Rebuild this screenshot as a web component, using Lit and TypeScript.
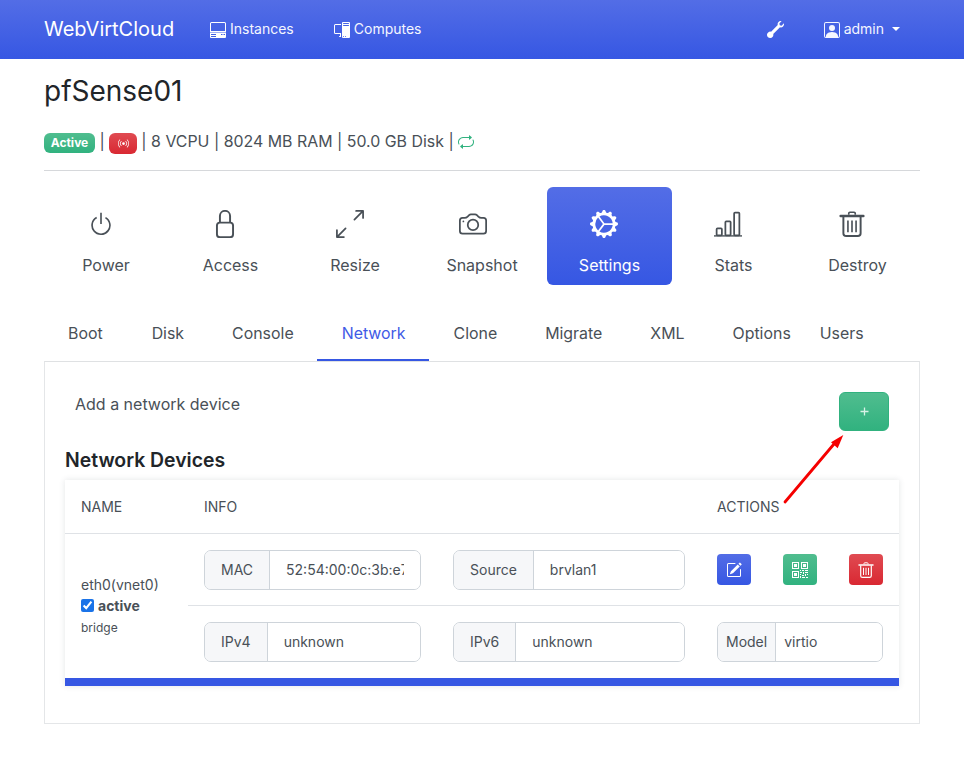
import { LitElement, html, css, svg } from "lit";
import { customElement } from "lit/decorators.js";

const P = {
  power: svg`<path d="M7.5 1v7h1V1h-1z"/><path d="M3 8.812a4.999 4.999 0 0 1 2.578-4.375l-.485-.874A6 6 0 1 0 11 3.616l-.501.865A5 5 0 1 1 3 8.812z"/>`,
  resize: svg`<path fill-rule="evenodd" d="M5.828 10.172a.5.5 0 0 0-.707 0l-4.096 4.096V11.5a.5.5 0 0 0-1 0v3.975a.5.5 0 0 0 .5.5H4.5a.5.5 0 0 0 0-1H1.732l4.096-4.096a.5.5 0 0 0 0-.707zm4.344-4.344a.5.5 0 0 0 .707 0l4.096-4.096V4.5a.5.5 0 1 0 1 0V.525a.5.5 0 0 0-.5-.5H11.5a.5.5 0 0 0 0 1h2.768l-4.096 4.096a.5.5 0 0 0 0 .707z"/>`,
  camera: svg`<path d="M15 12a1 1 0 0 1-1 1H2a1 1 0 0 1-1-1V6a1 1 0 0 1 1-1h1.172a3 3 0 0 0 2.12-.879l.83-.828A1 1 0 0 1 6.827 3h2.344a1 1 0 0 1 .707.293l.828.828A3 3 0 0 0 12.828 5H14a1 1 0 0 1 1 1v6zM2 4a2 2 0 0 0-2 2v6a2 2 0 0 0 2 2h12a2 2 0 0 0 2-2V6a2 2 0 0 0-2-2h-1.172a2 2 0 0 1-1.414-.586l-.828-.828A2 2 0 0 0 9.172 2H6.828a2 2 0 0 0-1.414.586l-.828.828A2 2 0 0 1 3.172 4H2z"/><path d="M8 11a2.5 2.5 0 1 1 0-5 2.5 2.5 0 0 1 0 5zm0 1a3.5 3.5 0 1 0 0-7 3.5 3.5 0 0 0 0 7zM3 6.5a.5.5 0 1 1-1 0 .5.5 0 0 1 1 0z"/>`,
  gear: svg`<path d="M7.068.727c.243-.97 1.62-.97 1.864 0l.071.286a.96.96 0 0 0 1.622.434l.205-.211c.695-.719 1.888-.03 1.613.931l-.08.284a.96.96 0 0 0 1.187 1.187l.283-.081c.96-.275 1.65.918.931 1.613l-.211.205a.96.96 0 0 0 .434 1.622l.286.071c.97.243.97 1.62 0 1.864l-.286.071a.96.96 0 0 0-.434 1.622l.211.205c.719.695.03 1.888-.931 1.613l-.284-.08a.96.96 0 0 0-1.187 1.187l.081.283c.275.96-.918 1.65-1.613.931l-.205-.211a.96.96 0 0 0-1.622.434l-.071.286c-.243.97-1.62.97-1.864 0l-.071-.286a.96.96 0 0 0-1.622-.434l-.205.211c-.695.719-1.888.03-1.613-.931l.08-.284a.96.96 0 0 0-1.186-1.187l-.284.081c-.96.275-1.65-.918-.931-1.613l.211-.205a.96.96 0 0 0-.434-1.622l-.286-.071c-.97-.243-.97-1.62 0-1.864l.286-.071a.96.96 0 0 0 .434-1.622l-.211-.205c-.719-.695-.03-1.888.931-1.613l.284.08a.96.96 0 0 0 1.187-1.186l-.081-.284c-.275-.96.918-1.65 1.613-.931l.205.211a.96.96 0 0 0 1.622-.434l.071-.286zM12.973 8.5H8.25l-2.834 3.779A4.998 4.998 0 0 0 12.973 8.5zm0-1a4.998 4.998 0 0 0-7.557-3.779l2.834 3.78h4.723zM5.048 3.967c-.03.021-.058.043-.087.065l.087-.065zm-.431.355A4.984 4.984 0 0 0 3.002 8c0 1.455.622 2.765 1.615 3.678L7.375 8 4.617 4.322zm.344 7.646.087.065-.087-.065z"/>`,
  bars: svg`<path d="M4 11H2v3h2v-3zm5-4H7v7h2V7zm5-5v12h-2V2h2zm-2-1a1 1 0 0 0-1 1v12a1 1 0 0 0 1 1h2a1 1 0 0 0 1-1V2a1 1 0 0 0-1-1h-2zM6 7a1 1 0 0 1 1-1h2a1 1 0 0 1 1 1v7a1 1 0 0 1-1 1H7a1 1 0 0 1-1-1V7zm-5 4a1 1 0 0 1 1-1h2a1 1 0 0 1 1 1v3a1 1 0 0 1-1 1H2a1 1 0 0 1-1-1v-3z"/><path d="M0 14.4h16v.8H0z"/>`,
  wrench: svg`<path transform="translate(16 0) scale(-1 1)" d="M.102 2.223A3.004 3.004 0 0 0 3.78 5.897l6.341 6.252A3.003 3.003 0 0 0 13 16a3 3 0 1 0-.851-5.878L5.897 3.781A3.004 3.004 0 0 0 2.223.1l2.141 2.142L4 4l-1.757.364L.102 2.223z"/>`,
  person: svg`<path d="M11 6a3 3 0 1 1-6 0 3 3 0 0 1 6 0z"/><path d="M2 0a2 2 0 0 0-2 2v12a2 2 0 0 0 2 2h12a2 2 0 0 0 2-2V2a2 2 0 0 0-2-2H2zm12 1a1 1 0 0 1 1 1v12a1 1 0 0 1-1 1v-1c0-1-1-4-6-4s-6 3-6 4v1a1 1 0 0 1-1-1V2a1 1 0 0 1 1-1h12z"/>`,
  pc: svg`<path d="M8 1a1 1 0 0 1 1-1h6a1 1 0 0 1 1 1v14a1 1 0 0 1-1 1H9a1 1 0 0 1-1-1V1Zm1 13.5a.5.5 0 1 0 1 0 .5.5 0 0 0-1 0Zm2 0a.5.5 0 1 0 1 0 .5.5 0 0 0-1 0ZM9.5 1a.5.5 0 0 0 0 1h5a.5.5 0 0 0 0-1h-5ZM9 3.5a.5.5 0 0 0 .5.5h5a.5.5 0 0 0 0-1h-5a.5.5 0 0 0-.5.5ZM1.5 2A1.5 1.5 0 0 0 0 3.5v7A1.5 1.5 0 0 0 1.5 12H6v2h-.5a.5.5 0 0 0 0 1H7v-4H1.5a.5.5 0 0 1-.5-.5v-7a.5.5 0 0 1 .5-.5H7V2H1.5Z"/>`,
  desk: svg`<path fill-rule="evenodd" d="M1.5 0h13A1.5 1.5 0 0 1 16 1.5V10H0V1.5A1.5 1.5 0 0 1 1.5 0Zm0 1a.5.5 0 0 0-.5.5V9h14V1.5a.5.5 0 0 0-.5-.5h-13Z"/><path fill-rule="evenodd" d="M0 10.6h16V15a1 1 0 0 1-1 1H1a1 1 0 0 1-1-1v-4.4Zm1 1.4v1h5v-1H1Zm0 2v1h5v-1H1Zm10-2v1h1.500v-1H11Zm2.500 0v1H15v-1h-1.500Z"/>`,
  broadcast: svg`<path d="M3.05 3.05a7 7 0 0 0 0 9.9.5.5 0 0 1-.707.707 8 8 0 0 1 0-11.314.5.5 0 0 1 .707.707zm2.122 2.122a4 4 0 0 0 0 5.656.5.5 0 1 1-.708.708 5 5 0 0 1 0-7.072.5.5 0 0 1 .708.708zm5.656-.708a.5.5 0 0 1 .708 0 5 5 0 0 1 0 7.072.5.5 0 1 1-.708-.708 4 4 0 0 0 0-5.656.5.5 0 0 1 0-.708zm2.122-2.12a.5.5 0 0 1 .707 0 8 8 0 0 1 0 11.313.5.5 0 0 1-.707-.707 7 7 0 0 0 0-9.9.5.5 0 0 1 0-.706zM10 8a2 2 0 1 1-4 0 2 2 0 0 1 4 0z"/>`,
  repeat: svg`<path d="M11 5.466V4H5a4 4 0 0 0-3.584 5.777.5.5 0 1 1-.896.446A5 5 0 0 1 5 3h6V1.534a.25.25 0 0 1 .41-.192l2.36 1.966c.12.1.12.284 0 .384l-2.36 1.966a.25.25 0 0 1-.41-.192Zm3.81.086a.5.5 0 0 1 .67.225A5 5 0 0 1 11 13H5v1.466a.25.25 0 0 1-.41.192l-2.36-1.966a.25.25 0 0 1 0-.384l2.36-1.966a.25.25 0 0 1 .41.192V12h6a4 4 0 0 0 3.585-5.777.5.5 0 0 1 .225-.67Z"/>`,
  edit: svg`<path d="M15.502 1.94a.5.5 0 0 1 0 .706L14.459 3.69l-2-2L13.502.646a.5.5 0 0 1 .707 0l1.293 1.293zm-1.75 2.456-2-2L4.939 9.21a.5.5 0 0 0-.121.196l-.805 2.414a.25.25 0 0 0 .316.316l2.414-.805a.5.5 0 0 0 .196-.12l6.813-6.814z"/><path fill-rule="evenodd" d="M1 13.5A1.5 1.5 0 0 0 2.5 15h11a1.5 1.5 0 0 0 1.5-1.5v-6a.5.5 0 0 0-1 0v6a.5.5 0 0 1-.5.5h-11a.5.5 0 0 1-.5-.5v-11a.5.5 0 0 1 .5-.5H9a.5.5 0 0 0 0-1H2.5A1.5 1.5 0 0 0 1 2.5v11z"/>`,
  qr: svg`<path fill-rule="evenodd" d="M0 0h7v7H0V0Zm1 1v5h5V1H1Zm1 1h3v3H2V2ZM9 0h7v7H9V0Zm1 1v5h5V1h-5Zm1 1h3v3h-3V2ZM0 9h7v7H0V9Zm1 1v5h5v-5H1Zm1 1h3v3H2v-3Zm6-3h1v1H8V8Zm2 0h2v1h-2V8Zm3 0h3v1h-3V8ZM8 10h2v1H8v-1Zm3 0h1v2h-1v-2Zm2 0h3v1h-3v-1ZM8 12h1v1H8v-1Zm2 1h2v1h-2v-1Zm3-1h1v2h-1v-2Zm2 0h1v1h-1v-1ZM8 14h1v2H8v-2Zm2 1h3v1h-3v-1Zm4 0h2v1h-2v-1Z"/>`,
};

const T = {
  lock: svg`<path d="M5.100 7.200V3.400a2.900 2.900 0 0 1 5.800 0V7.200" fill="none" stroke="currentColor" stroke-width="1.100"/><rect x="3.400" y="7.200" width="9.200" height="8.300" rx="1.700" fill="none" stroke="currentColor" stroke-width="1.100"/>`,
  trash: svg`<g fill="none" stroke="currentColor" stroke-width="1.200"><path d="M1 3.100h14" stroke-width="1.500" stroke-linecap="round"/><path d="M6 2.300V1.500a.7.7 0 0 1 .7-.7h2.600a.7.7 0 0 1 .7.7v.8" stroke-width="1"/><path d="M2.700 3.500v10.200a1.700 1.700 0 0 0 1.700 1.700h7.200a1.700 1.700 0 0 0 1.700-1.700V3.500"/><path d="M5.500 5.800v7.200M8 5.800v7.200M10.500 5.800v7.200" stroke-width="1"/></g>`,
};

const icon = (body: unknown, size: number, cls = "") =>
  html`<svg class="ic ${cls}" width=${size} height=${size} viewBox="0 0 16 16" fill="currentColor" aria-hidden="true">${body}</svg>`;

type Act = { label: string; body: unknown; iconSize: number; shift: string; active?: boolean };

const ACTIONS: Act[] = [
  { label: "Power", body: P.power, iconSize: 26, shift: "sm" },
  { label: "Access", body: T.lock, iconSize: 28, shift: "md" },
  { label: "Resize", body: P.resize, iconSize: 28, shift: "sm" },
  { label: "Snapshot", body: P.camera, iconSize: 28, shift: "lg" },
  { label: "Settings", body: P.gear, iconSize: 28, shift: "md", active: true },
  { label: "Stats", body: P.bars, iconSize: 28, shift: "md" },
  { label: "Destroy", body: T.trash, iconSize: 26, shift: "md" },
];
const TABS = ["Boot", "Disk", "Console", "Network", "Clone", "Migrate", "XML", "Options", "Users"];

@customElement("app-root")
export class AppRoot extends LitElement {
  static styles = css`
    :host {
      display: block;
      position: relative;
      min-height: 764px;
      background: #fff;
      color: #495057;
      font-family: Inter, "Liberation Sans", sans-serif;
      font-size: 16px;
    }
    .ic { display: block; flex: none; }
    .nav {
      height: 59px;
      background: linear-gradient(180deg, #536de6 0%, #3657e3 100%);
      color: #fff;
      display: flex;
      align-items: center;
      padding: 0 64px 0 44px;
    }
    .brand { font-size: 20px; width: 166px; margin-top: -2px; }
    .nav-link { font-size: 14px; margin: -2px 40px 0 4px; color: #f4f6ff; }
    .spacer { flex: 1; }
    .wrench { margin-right: 40px; }
    .user { display: flex; align-items: center; gap: 4px; font-size: 14px; color: #f4f6ff; }
    .user span { margin-top: -2px; }
    .caret { width: 0; height: 0; border: 4.5px solid transparent; border-top-color: #fff; border-bottom: 0; margin-left: 4px; margin-top: -2px; }
    main { padding: 0 44px; }
    h1 { font-size: 28px; font-weight: 400; line-height: 34px; margin: 15px 0 0; color: #212529; }
    .meta { display: flex; align-items: center; gap: 4.500px; margin-top: 24px; height: 20px; font-size: 15.900px; line-height: 20px; white-space: pre; }
    .badge { display: inline-flex; align-items: center; justify-content: center; height: 20px; margin-top: 2px; border-radius: 6px; color: #fff; font-size: 12px; font-weight: 700; }
    .b-ok { width: 51px; background: linear-gradient(180deg, #50bd8f, #31b27f); }
    .b-red { width: 28px; height: 21px; margin-top: 3px; margin-right: -.5px; background: linear-gradient(180deg, #e04b52, #d92832); }
    .repeat { color: #31b27f; }
    hr { border: 0; border-top: 1px solid #d6d8db; margin: 18px 0 16px; }
    .acts { display: grid; grid-template-columns: 124px 125px 124px 130px 125px 123px 125px; }
    .act { height: 98px; border-radius: 6px; display: flex; flex-direction: column; align-items: center; color: #495057; }
    .act.on { background: linear-gradient(180deg, #536de6, #3657e3); color: #fff; }
    .act .holder { height: 28px; margin-top: 23px; display: flex; align-items: center; }
    .act .sm { margin-right: 10px; }
    .act .md { margin-right: 12px; }
    .act .lg { margin-right: 19px; }
    .act span { margin-top: 17px; line-height: 20px; }
    .tabs { display: flex; margin-top: 28px; height: 48px; font-size: 15.900px; }
    .tab { padding: 0 24px 6px; box-sizing: border-box; display: flex; align-items: center; height: 48px; border-bottom: 2px solid transparent; }
    .tab:first-child { padding-right: 25px; }
    .tab.on { color: #3f5be6; border-bottom-color: #3657e3; margin: 0 1px 0 -1px; padding-left: 25px; padding-right: 23px; }
    .tab.opt { padding-right: 5px; }
    .panel { border: 1px solid #e4e6e8; border-top-color: #dfe1e3; height: 363px; box-sizing: border-box; padding: 30px 30px 0 20px; }
    .addrow { display: flex; justify-content: space-between; align-items: flex-start; padding-left: 10px; }
    .addrow .lbl { font-size: 16px; line-height: 24px; }
    .add { width: 50px; height: 39px; border: 1px solid #31b27f; box-sizing: border-box; border-radius: 6px; background: linear-gradient(180deg, #50bd8f, #31b27f); color: #d7f2e6; display: flex; align-items: center; justify-content: center; }
    h2 { font-size: 19.400px; font-weight: 600; color: #212529; margin: 16px 0 7px; line-height: 26px; }
    .card { width: 834px; height: 206px; box-shadow: 0 0 6px rgba(60, 70, 80, .14); background: #fff; box-sizing: border-box; border-bottom: 8px solid #3657e3; display: flex; flex-direction: column; }
    .head { display: grid; grid-template-columns: 123px 513px 1fr; height: 54px; border-bottom: 1px solid #dfe2e6; box-sizing: border-box; align-items: center; font-size: 14px; }
    .head div { padding-left: 16px; }
    .body { display: grid; grid-template-columns: 123px 1fr; flex: 1; }
    .name { padding: 40px 0 0 16px; font-size: 14px; line-height: 21px; }
    .active { display: flex; align-items: center; gap: 4px; font-weight: 700; line-height: 21px; }
    .active input { width: 13px; height: 13px; margin: 0; accent-color: #1a73e8; }
    .small { font-size: 12px; line-height: 18px; margin-top: 3px; }
    .rows { display: flex; flex-direction: column; }
    .row { display: grid; grid-template-columns: 249px 264px 166px; padding: 16px 0 0 16px; box-sizing: border-box; height: 71px; }
    .row + .row { border-top: 1px solid #dfe2e6; height: 73px; }
    .group { display: flex; height: 40px; border: 1px solid #ced4da; border-radius: 7px; box-sizing: border-box; overflow: hidden; font-size: 14px; }
    .w1 { width: 217px; } .w2 { width: 232px; } .w3 { width: 166px; }
    .addon { background: #f6f7f9; border-right: 1px solid #ced4da; padding: 0 16px 2px; display: flex; align-items: center; }
    .addon.tight { padding: 0 8px 2px; }
    .group input { flex: 1; min-width: 0; border: 0; outline: 0; padding: 0 16px 2px; font: inherit; color: #495057; background: #fff; }
    .group input.tight { padding: 0 8px 2px; }
    .btns { display: flex; justify-content: space-between; width: 166px; padding-top: 4px; }
    .btn { width: 34px; height: 31px; border-radius: 4px; color: #fff; display: flex; align-items: center; justify-content: center; }
    .blue { background: linear-gradient(180deg, #536de6, #3657e3); }
    .green { background: linear-gradient(180deg, #50bd8f, #31b27f); }
    .red { background: linear-gradient(180deg, #e04b52, #d92832); }
    .arrow { position: absolute; left: 780px; top: 430px; pointer-events: none; }
  `;

  group(label: string, value: string, w: string, tight = false) {
    return html`<div class="group ${w}">
      <div class="addon ${tight ? "tight" : ""}">${label}</div>
      <input class=${tight ? "tight" : ""} readonly .value=${value} />
    </div>`;
  }

  render() {
    return html`
      <header class="nav">
        <div class="brand">WebVirtCloud</div>
        ${icon(P.desk, 16)}<div class="nav-link">Instances</div>
        ${icon(P.pc, 16)}<div class="nav-link">Computes</div>
        <div class="spacer"></div>
        ${icon(P.wrench, 17, "wrench")}
        <div class="user">${icon(P.person, 16)}<span>admin</span><i class="caret"></i></div>
      </header>
      <main>
        <h1>pfSense01</h1>
        <div class="meta">
          <span class="badge b-ok">Active</span><span>|</span>
          <span class="badge b-red">${icon(P.broadcast, 11)}</span><span>|</span><span>8 VCPU</span><span>|</span><span>8024 MB RAM</span><span>|</span><span>50.0 GB Disk</span><span>|</span>
          <span class="repeat">${icon(P.repeat, 16)}</span>
        </div>
        <hr />
        <div class="acts">
          ${ACTIONS.map(
            (a) => html`<div class="act ${a.active ? "on" : ""}">
              <div class="holder">${icon(a.body, a.iconSize, a.shift)}</div>
              <span>${a.label}</span>
            </div>`
          )}
        </div>
        <div class="tabs">
          ${TABS.map((t) => html`<div class="tab ${t === "Network" ? "on" : ""} ${t === "Options" ? "opt" : ""}">${t}</div>`)}
        </div>
        <section class="panel">
          <div class="addrow">
            <div class="lbl">Add a network device</div>
            <div class="add"><svg width="9" height="9" viewBox="0 0 9 9"><path d="M4.500 .5v8M.5 4.500h8" stroke="currentColor" stroke-width="1.300"/></svg></div>
          </div>
          <h2>Network Devices</h2>
          <div class="card">
            <div class="head"><div>NAME</div><div>INFO</div><div>ACTIONS</div></div>
            <div class="body">
              <div class="name">
                <div>eth0(vnet0)</div>
                <label class="active"><input type="checkbox" checked />active</label>
                <div class="small">bridge</div>
              </div>
              <div class="rows">
                <div class="row">
                  ${this.group("MAC", "52:54:00:0c:3b:e7", "w1")}
                  ${this.group("Source", "brvlan1", "w2")}
                  <div class="btns">
                    <div class="btn blue">${icon(P.edit, 16)}</div>
                    <div class="btn green">${icon(P.qr, 16)}</div>
                    <div class="btn red">${icon(T.trash, 16)}</div>
                  </div>
                </div>
                <div class="row">
                  ${this.group("IPv4", "unknown", "w1")}
                  ${this.group("IPv6", "unknown", "w2")}
                  ${this.group("Model", "virtio", "w3", true)}
                </div>
              </div>
            </div>
          </div>
        </section>
      </main>
      <svg class="arrow" width="70" height="80" viewBox="0 0 70 80">
        <path d="M5 72 L54 14" stroke="#f50000" stroke-width="2.800" stroke-linecap="round" fill="none"/>
        <path d="M63.300 5 L51 12.300 L57.700 18.300 Z" fill="#f50000"/>
      </svg>
    `;
  }
}
